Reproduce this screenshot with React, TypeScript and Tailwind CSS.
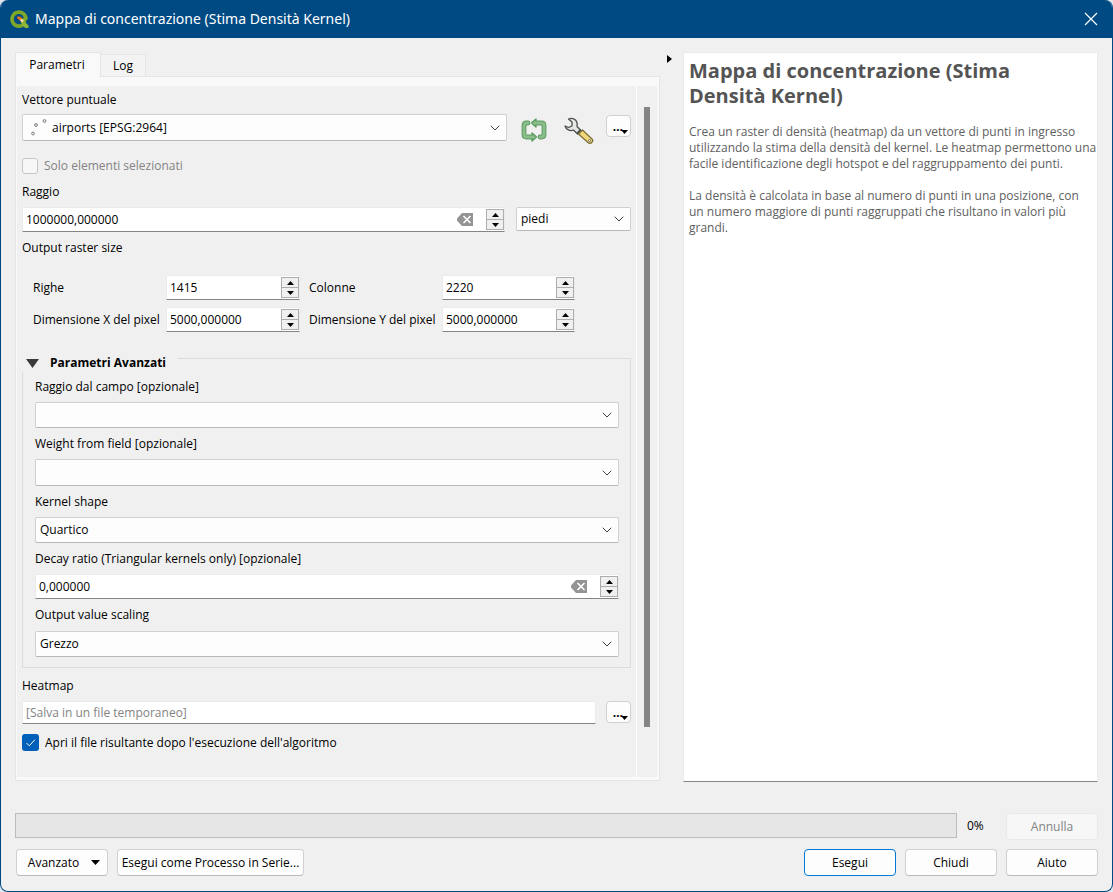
import type { ReactNode } from 'react';
import { ChevronDown } from 'lucide-react';
import { cva } from 'class-variance-authority';
import clsx from 'clsx';

const button = cva('flex items-center justify-center rounded-[4px] border h-[27px]', {
  variants: {
    tone: {
      normal: 'border-[#d0d0d0] border-b-[#b9b9b9] bg-[#fdfdfd] text-black',
      primary: 'border-[#0078d4] bg-[#fdfdfd] text-black',
      disabled: 'border-[#e8e8e8] bg-[#f7f7f7] text-[#838383]',
    },
  },
  defaultVariants: { tone: 'normal' },
});

function QgisLogo() {
  return (
    <svg viewBox="0 0 20 20" className="h-5 w-5" aria-hidden="true">
      <path d="M14.500 15.500A7 7 0 1 1 17 10.500" fill="none" stroke="#7fa82a" strokeWidth="3.600" />
      <path d="M17.600 8.500a8 8 0 0 1-1 5.500l-3-2.500 .8-3z" fill="#7fa82a" />
      <path d="M11.500 13l2.500-2 5.500 5.500V19h-3.500z" fill="#8fb53a" />
      <path d="M8 7.500l3.500.3 2 2-2.200 2.200-2.800-2.600z" fill="#ee7913" />
      <path d="M11 11.500l2-2 2 2-2 2z" fill="#f5d9a0" />
    </svg>
  );
}

function PointsIcon() {
  return (
    <svg viewBox="0 0 18 18" className="h-[18px] w-[18px]" fill="#f4f4f4" stroke="#7d7d7d" aria-hidden="true">
      <circle cx="15.500" cy="2" r="1.400" />
      <circle cx="7" cy="6" r="1.400" />
      <circle cx="4" cy="14.500" r="1.400" />
    </svg>
  );
}

const LEFT_ARM = 'M8 5H6.500Q4 5 4 7.500V16.500Q4 19 6.500 19H13';
const RIGHT_ARM = 'M15 5H21.500Q24 5 24 7.500V16.500Q24 19 21.500 19H20';

function IterateIcon() {
  return (
    <svg
      viewBox="0 0 28 24"
      className="h-6 w-7"
      fill="none"
      strokeLinejoin="round"
      strokeLinecap="round"
      aria-hidden="true"
    >
      <g stroke="#5c9c60" strokeWidth="4.800">
        <path d={LEFT_ARM} />
        <path d={RIGHT_ARM} />
      </g>
      <g fill="#8bbd8c" stroke="#5c9c60" strokeWidth="1.400">
        <path d="M16 1v8l-4.500-4z" />
        <path d="M12 15v8l4.500-4z" />
      </g>
      <g stroke="#8bbd8c" strokeWidth="2.800">
        <path d={LEFT_ARM} />
        <path d={RIGHT_ARM} />
      </g>
    </svg>
  );
}

function WrenchIcon() {
  return (
    <svg viewBox="0 0 30 28" className="h-7 w-[30px]" strokeLinejoin="round" aria-hidden="true">
      <path
        d="M4.500 2C8 .5 12 2 13 5.500c.4 1.500.2 3 0 4l4 4-3.500 3.500-4-4C6 14.500 2 12.500 1 9l3.500 1.500L8 9V5z"
        fill="#e6e8e6"
        stroke="#4c4f4c"
        strokeWidth="1.300"
      />
      <path d="M12.500 15.500l3.500-3.500 2.500 2-3.500 4z" fill="#555753" />
      <path
        d="M14.500 17l4-4 9.500 9c1 1 .8 2.500-.2 3.500s-2.600 1.200-3.600.2z"
        fill="#f0d77b"
        stroke="#7a6c35"
        strokeWidth="1.200"
      />
      <circle cx="25.500" cy="23.500" r="1" fill="#fff" stroke="#555" strokeWidth=".8" />
    </svg>
  );
}

function Triangle({ dir, className }: { dir: 'up' | 'down' | 'right'; className: string }) {
  const points = { up: '0,10 10,10 5,0', down: '0,0 10,0 5,10', right: '0,0 10,5 0,10' }[dir];
  return (
    <svg viewBox="0 0 10 10" preserveAspectRatio="none" className={className} fill="currentColor" aria-hidden="true">
      <polygon points={points} />
    </svg>
  );
}

function ClearIcon() {
  return (
    <svg viewBox="0 0 17 13" className="h-[13px] w-[17px]" aria-hidden="true">
      <path d="M5 0H16v13H5L0 7.500v-2z" fill="#949494" />
      <path d="M6.500 3l7 7m0-7l-7 7" stroke="#fff" strokeWidth="1.600" />
    </svg>
  );
}

interface ComboProps {
  id: string;
  options: string[];
  label?: string;
  icon?: ReactNode;
  className?: string;
}

function Combo({ id, options, label, icon, className }: ComboProps) {
  return (
    <div
      className={clsx(
        'grid items-center rounded-[2px] border border-[#d0d0d0] border-b-[#b9b9b9] bg-[#fdfdfd]',
        className
      )}
    >
      <select
        id={id}
        aria-label={label}
        className={clsx('col-start-1 row-start-1 h-full w-full appearance-none', icon ? 'pl-[29px]' : 'pl-1')}
      >
        {options.map((o) => (
          <option key={o}>{o}</option>
        ))}
      </select>
      {icon && <span className="pointer-events-none col-start-1 row-start-1 ml-1.5">{icon}</span>}
      <ChevronDown
        className="pointer-events-none col-start-1 row-start-1 mr-[3px] h-4 w-4 justify-self-end text-[#404040]"
        strokeWidth={1.5}
      />
    </div>
  );
}

interface SpinProps {
  id: string;
  value: string;
  clearable?: boolean;
  className?: string;
}

function SpinBox({ id, value, clearable, className }: SpinProps) {
  return (
    <div
      className={clsx(
        'flex h-[25px] items-center border border-[#ebebeb] border-b-[#858585] bg-white',
        className
      )}
    >
      <input id={id} defaultValue={value} className="h-full w-full min-w-0 flex-1 pl-[3px] outline-none" />
      {clearable && (
        <button type="button" aria-label="Cancella" className="mr-3">
          <ClearIcon />
        </button>
      )}
      <div className="flex h-[21px] w-[18px] flex-col border border-[#adadad] bg-[#f0f0f0]">
        <button type="button" aria-label="Aumenta" className="flex flex-1 items-center justify-center">
          <Triangle dir="up" className="h-1 w-[7px]" />
        </button>
        <button
          type="button"
          aria-label="Diminuisci"
          className="flex flex-1 items-center justify-center border-t border-[#adadad]"
        >
          <Triangle dir="down" className="h-1 w-[7px]" />
        </button>
      </div>
    </div>
  );
}

function MoreButton({ label }: { label: string }) {
  return (
    <button
      type="button"
      aria-label={label}
      className="flex h-[22px] w-[25px] items-end justify-end rounded-[4px] border border-[#d0d0d0] bg-[#fdfdfd] pr-0.5 pb-0.5"
    >
      <span className="-mr-0.5 pb-px leading-3 font-bold">…</span>
      <Triangle dir="down" className="h-1 w-[7px]" />
    </button>
  );
}

function FieldLabel({ id, children }: { id: string; children: ReactNode }) {
  return (
    <label htmlFor={id} className="block h-4 leading-4 whitespace-nowrap">
      {children}
    </label>
  );
}

const SIZE_FIELDS = [
  { id: 'rows', label: 'Righe', value: '1415' },
  { id: 'cols', label: 'Colonne', value: '2220' },
  { id: 'px', label: 'Dimensione X del pixel', value: '5000,000000' },
  { id: 'py', label: 'Dimensione Y del pixel', value: '5000,000000' },
];

function AdvancedGroup() {
  return (
    <section className="mt-[22px]">
      <div className="flex h-[18px] items-center">
        <button type="button" className="flex items-center gap-[11px] pl-1 font-bold">
          <Triangle dir="down" className="h-[9px] w-[13px] text-[#3a3a3a]" />
          Parametri Avanzati
        </button>
        <div className="ml-3 h-[14px] flex-1 self-end border-t border-r border-[#dcdcdc]" />
      </div>
      <div className="border border-t-0 border-[#dcdcdc] pt-[7px] pr-[11px] pb-2.5 pl-3">
        <FieldLabel id="radiusField">Raggio dal campo [opzionale]</FieldLabel>
        <Combo id="radiusField" options={['']} className="mt-[7px] h-[26px]" />
        <div className="mt-2">
          <FieldLabel id="weightField">Weight from field [opzionale]</FieldLabel>
        </div>
        <Combo id="weightField" options={['']} className="mt-[7px] h-[27px]" />
        <div className="mt-2">
          <FieldLabel id="kernel">Kernel shape</FieldLabel>
        </div>
        <Combo id="kernel" options={['Quartico']} className="mt-[7px] h-[26px]" />
        <div className="mt-2">
          <FieldLabel id="decay">Decay ratio (Triangular kernels only) [opzionale]</FieldLabel>
        </div>
        <SpinBox id="decay" value="0,000000" clearable className="mt-[7px]" />
        <div className="mt-2">
          <FieldLabel id="scaling">Output value scaling</FieldLabel>
        </div>
        <Combo id="scaling" options={['Grezzo']} className="mt-2 h-[26px]" />
      </div>
    </section>
  );
}

function ParametersForm() {
  return (
    <div className="min-w-0 flex-1 px-[5px] pt-1.5">
      <FieldLabel id="layer">Vettore puntuale</FieldLabel>
      <div className="mt-1.5 flex items-start">
        <Combo id="layer" options={['airports [EPSG:2964]']} icon={<PointsIcon />} className="h-[27px] flex-1" />
        <button type="button" aria-label="Itera" className="mt-1 ml-[13px]">
          <IterateIcon />
        </button>
        <button type="button" aria-label="Opzioni avanzate" className="mt-[3px] mr-3 ml-4">
          <WrenchIcon />
        </button>
        <div className="mt-px">
          <MoreButton label="Sfoglia vettore" />
        </div>
      </div>
      <label className="mt-[13px] flex h-4 items-center gap-1.5 text-[#838383]">
        <input
          type="checkbox"
          disabled
          className="h-4 w-4 appearance-none rounded-[3px] border border-[#c6c6c6] bg-[#f7f7f7]"
        />
        Solo elementi selezionati
      </label>
      <div className="mt-2.5">
        <FieldLabel id="radius">Raggio</FieldLabel>
      </div>
      <div className="mt-[7px] flex gap-[11px]">
        <SpinBox id="radius" value="1000000,000000" clearable className="flex-1" />
        <Combo id="units" label="Unità" options={['piedi']} className="h-6 w-[115px]" />
      </div>
      <p className="mt-2 h-4 leading-4">Output raster size</p>
      <div className="mt-[19px] ml-[11px] grid grid-cols-[124px_134px_124px_133px] items-center gap-x-[9px] gap-y-[7px]">
        {SIZE_FIELDS.map((f) => (
          <div key={f.id} className="contents">
            <FieldLabel id={f.id}>{f.label}</FieldLabel>
            <SpinBox id={f.id} value={f.value} />
          </div>
        ))}
      </div>
      <AdvancedGroup />
      <div className="mt-2.5">
        <FieldLabel id="output">Heatmap</FieldLabel>
      </div>
      <div className="mt-[7px] flex gap-2.5">
        <input
          id="output"
          placeholder="[Salva in un file temporaneo]"
          className="h-[23px] min-w-0 flex-1 border border-[#ebebeb] border-b-[#858585] bg-white pl-[3px] outline-none placeholder:text-[#838383]"
        />
        <MoreButton label="Sfoglia output" />
      </div>
      <label className="mt-2.5 flex h-[17px] items-center gap-1.5">
        <span className="grid place-items-center">
          <input
            type="checkbox"
            defaultChecked
            className="col-start-1 row-start-1 h-[17px] w-[17px] appearance-none rounded-[3px] bg-[#005fb8]"
          />
          <svg
            viewBox="0 0 17 17"
            className="pointer-events-none col-start-1 row-start-1 h-[17px] w-[17px]"
            fill="none"
            stroke="#fff"
            aria-hidden="true"
          >
            <path d="M4.500 9l2.800 2.800 5.500-6" />
          </svg>
        </span>
        Apri il file risultante dopo l'esecuzione dell'algoritmo
      </label>
    </div>
  );
}

export default function App() {
  return (
    <div className="bg-[#dfe6ec]">
      <div className="flex min-h-screen flex-col overflow-hidden rounded-lg border border-t-0 border-[#004a83] bg-[#f0f0f0] font-['Open_Sans','Noto_Sans',sans-serif] text-xs text-black">
        <header className="flex h-[38px] items-center bg-[#004a83] pr-3.5 pl-2 text-white">
          <QgisLogo />
          <h1 className="ml-1.5 flex-1 font-['Noto_Sans','Open_Sans',sans-serif] text-sm">
            Mappa di concentrazione (Stima Densità Kernel)
          </h1>
          <button type="button" aria-label="Chiudi finestra">
            <svg viewBox="0 0 14 14" className="h-3.5 w-3.5" stroke="#fff" strokeWidth="1.200" aria-hidden="true">
              <path d="M1 1l12 12M13 1L1 13" />
            </svg>
          </button>
        </header>

        <main className="flex flex-1 px-3.5 pt-3.5">
          <div className="flex min-w-0 flex-1 flex-col pb-px">
            <div role="tablist" className="z-10 -mb-px flex items-end">
              <button
                type="button"
                role="tab"
                aria-selected="true"
                className="h-[25px] w-[86px] border border-b-0 border-[#e5e5e5] bg-[#f9f9f9] pr-0.5"
              >
                Parametri
              </button>
              <button
                type="button"
                role="tab"
                aria-selected="false"
                className="h-[23px] w-[45px] border border-l-0 border-[#e5e5e5] bg-[#f3f3f3]"
              >
                Log
              </button>
            </div>
            <div className="flex flex-1 border border-[#e5e5e5] bg-[#f9f9f9] pt-[9px] pr-0.5 pb-[3px] pl-px">
              <div className="flex flex-1 bg-[#f0f0f0]">
                <ParametersForm />
                <div className="flex w-[21px] justify-center border-l border-white pt-[21px] pb-[50px]">
                  <div className="w-1.5 bg-[#858585]" />
                </div>
              </div>
            </div>
          </div>

          <div className="w-[23px] pt-[3px] pl-[7px]">
            <button type="button" aria-label="Nascondi aiuto" className="block">
              <Triangle dir="right" className="h-2 w-[5px]" />
            </button>
          </div>

          <aside className="w-[415px] border border-[#ebebeb] border-b-[#858585] bg-white pt-[5px] pl-[5px] text-[#606060]">
            <h2 className="text-xl leading-[25px] font-bold text-[#545454]">
              Mappa di concentrazione (Stima
              <br />
              Densità Kernel)
            </h2>
            <p className="mt-4 leading-4 whitespace-nowrap">
              Crea un raster di densità (heatmap) da un vettore di punti in ingresso
              <br />
              utilizzando la stima della densità del kernel. Le heatmap permettono una
              <br />
              facile identificazione degli hotspot e del raggruppamento dei punti.
            </p>
            <p className="mt-4 pr-1 leading-4">
              La densità è calcolata in base al numero di punti in una posizione, con un numero maggiore di punti
              raggruppati che risultano in valori più grandi.
            </p>
          </aside>
        </main>

        <footer className="px-3.5 pt-[31px] pb-[15px]">
          <div className="flex">
            <div
              role="progressbar"
              aria-label="Avanzamento"
              aria-valuenow={0}
              className="h-[25px] flex-1 border border-[#bcbcbc] bg-[#e6e6e6]"
            />
            <span className="ml-2.5 w-[39px] leading-[25px]">0%</span>
            <button type="button" disabled className={clsx(button({ tone: 'disabled' }), 'w-[92px]')}>
              Annulla
            </button>
          </div>
          <div className="mt-[9px] flex pl-px">
            <button type="button" className={clsx(button(), 'w-[92px] gap-3 pl-1')}>
              Avanzato
              <Triangle dir="down" className="h-[5px] w-[9px]" />
            </button>
            <button type="button" className={clsx(button(), 'ml-[9px] w-[187px]')}>
              Esegui come Processo in Serie...
            </button>
            <div className="ml-auto flex gap-[9px]">
              <button type="button" className={clsx(button({ tone: 'primary' }), 'w-[92px]')}>
                Esegui
              </button>
              <button type="button" className={clsx(button(), 'w-[92px]')}>
                Chiudi
              </button>
              <button type="button" className={clsx(button(), 'w-[92px]')}>
                Aiuto
              </button>
            </div>
          </div>
        </footer>
      </div>
    </div>
  );
}
